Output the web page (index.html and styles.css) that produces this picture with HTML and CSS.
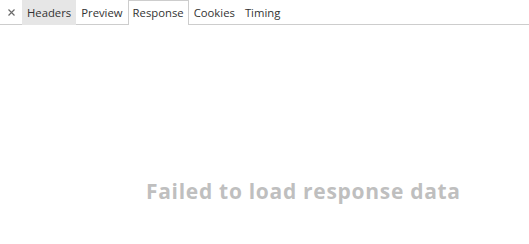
FILE: index.html
```html
<!DOCTYPE html>
<html>
<head>
<meta charset="utf-8">
<link rel="stylesheet" href="styles.css">
</head>
<body>
<div class="tabbar">
  <div class="close">
    <svg width="7" height="7" viewBox="0 0 7 7"><path d="M0.5 0.5L6.5 6.5M6.5 0.5L0.5 6.5" stroke="#6a6a6a" stroke-width="1.2"/></svg>
  </div>
  <div class="tab hover">Headers</div>
  <div class="tab">Preview</div>
  <div class="tab selected">Response</div>
  <div class="tab">Cookies</div>
  <div class="tab">Timing</div>
</div>
<div class="content">
  <div class="message">Failed to load response data</div>
</div>
</body>
</html>
```
FILE: styles.css
```css
html, body {
  margin: 0;
  padding: 0;
  background: #fff;
}
body {
  width: 529px;
  height: 244px;
  overflow: hidden;
  font-family: "Open Sans", "Noto Sans", sans-serif;
}
.tabbar {
  display: flex;
  align-items: stretch;
  height: 24px;
  border-bottom: 1px solid #cdcdcd;
  font-size: 11.3px;
  color: #333;
}
.close {
  width: 22px;
  display: flex;
  align-items: center;
  justify-content: center;
  padding-top: 1px;
  box-sizing: border-box;
}
.tab {
  display: flex;
  align-items: center;
  padding: 0 4px 1px;
  border: 1px solid transparent;
  border-bottom: none;
  margin-bottom: -1px;
}
.tab.hover {
  background: #e6e6e6;
}
.tab.selected {
  background: #fff;
  border-color: #cdcdcd;
}
.content {
  padding: 152px 0 0 146px;
}
.message {
  font-size: 21px;
  font-weight: bold;
  letter-spacing: 0.7px;
  color: #bfbfbf;
  white-space: nowrap;
}
```
